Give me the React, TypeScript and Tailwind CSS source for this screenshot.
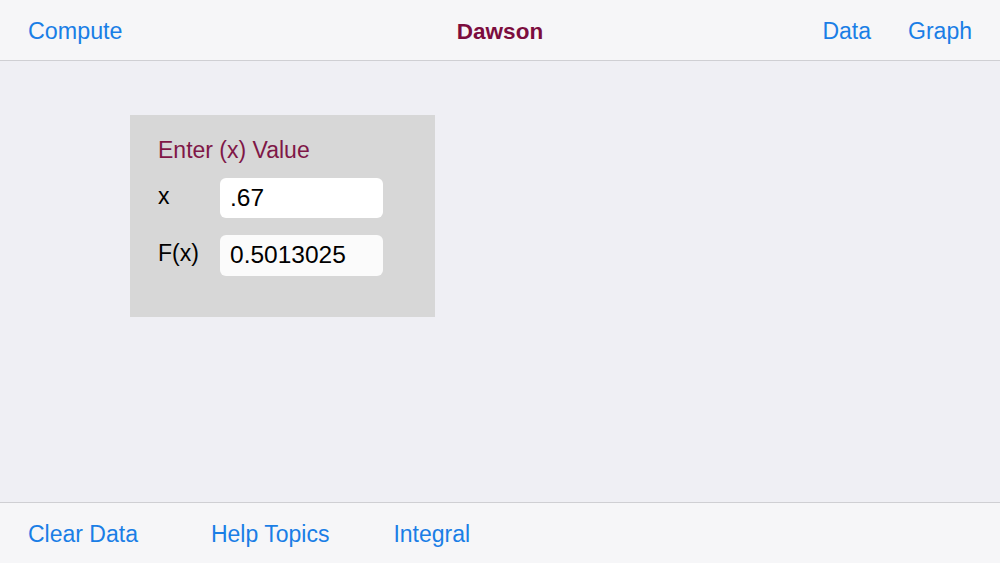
import React from "react";

export default function App() {
  const font = { fontFamily: '"Liberation Sans", Arial, sans-serif' };
  return (
    <div className="w-[1000px] h-[563px] flex flex-col bg-[#efeff4] overflow-hidden" style={font}>
      <div className="h-[61px] shrink-0 bg-[#f6f6f8] border-b border-[#cfcfd3] grid grid-cols-[1fr_auto_1fr] items-center px-[28px] pt-[3px]">
        <span className="text-[23.3px] text-[#1a7ee6]">Compute</span>
        <span className="text-[22.5px] font-bold text-[#7c0d3e]">Dawson</span>
        <div className="flex justify-end gap-[37px]">
          <span className="text-[23px] text-[#1a7ee6]">Data</span>
          <span className="text-[23px] text-[#1a7ee6]">Graph</span>
        </div>
      </div>
      <div className="flex-1 pt-[54px] pl-[130px]">
        <div className="w-[305px] h-[202px] bg-[#d7d7d7] pl-[28px] pt-[21px]">
          <div className="text-[23px] text-[#7f1747] leading-[28px]">Enter (x) Value</div>
          <div className="flex items-center mt-[14px]">
            <span className="w-[62px] text-[23px] text-black -mt-[4px]">x</span>
            <div className="w-[163px] h-[40px] bg-white rounded-[6px] flex items-center pl-[10px] text-[24.5px] text-black">.67</div>
          </div>
          <div className="flex items-center mt-[17px]">
            <span className="w-[62px] text-[23px] text-black -mt-[4px]">F(x)</span>
            <div className="w-[163px] h-[41px] bg-[#fbfbfb] rounded-[6px] flex items-center pl-[10px] text-[24.5px] text-black">0.5013025</div>
          </div>
        </div>
      </div>
      <div className="h-[61px] shrink-0 bg-[#f6f6f8] border-t border-[#cfcfd3] flex items-center px-[28px] pt-[3px]">
        <span className="text-[23px] text-[#1a7ee6]">Clear Data</span>
        <span className="text-[23px] text-[#1a7ee6] ml-[73px]">Help Topics</span>
        <span className="text-[23px] text-[#1a7ee6] ml-[64px]">Integral</span>
      </div>
    </div>
  );
}
